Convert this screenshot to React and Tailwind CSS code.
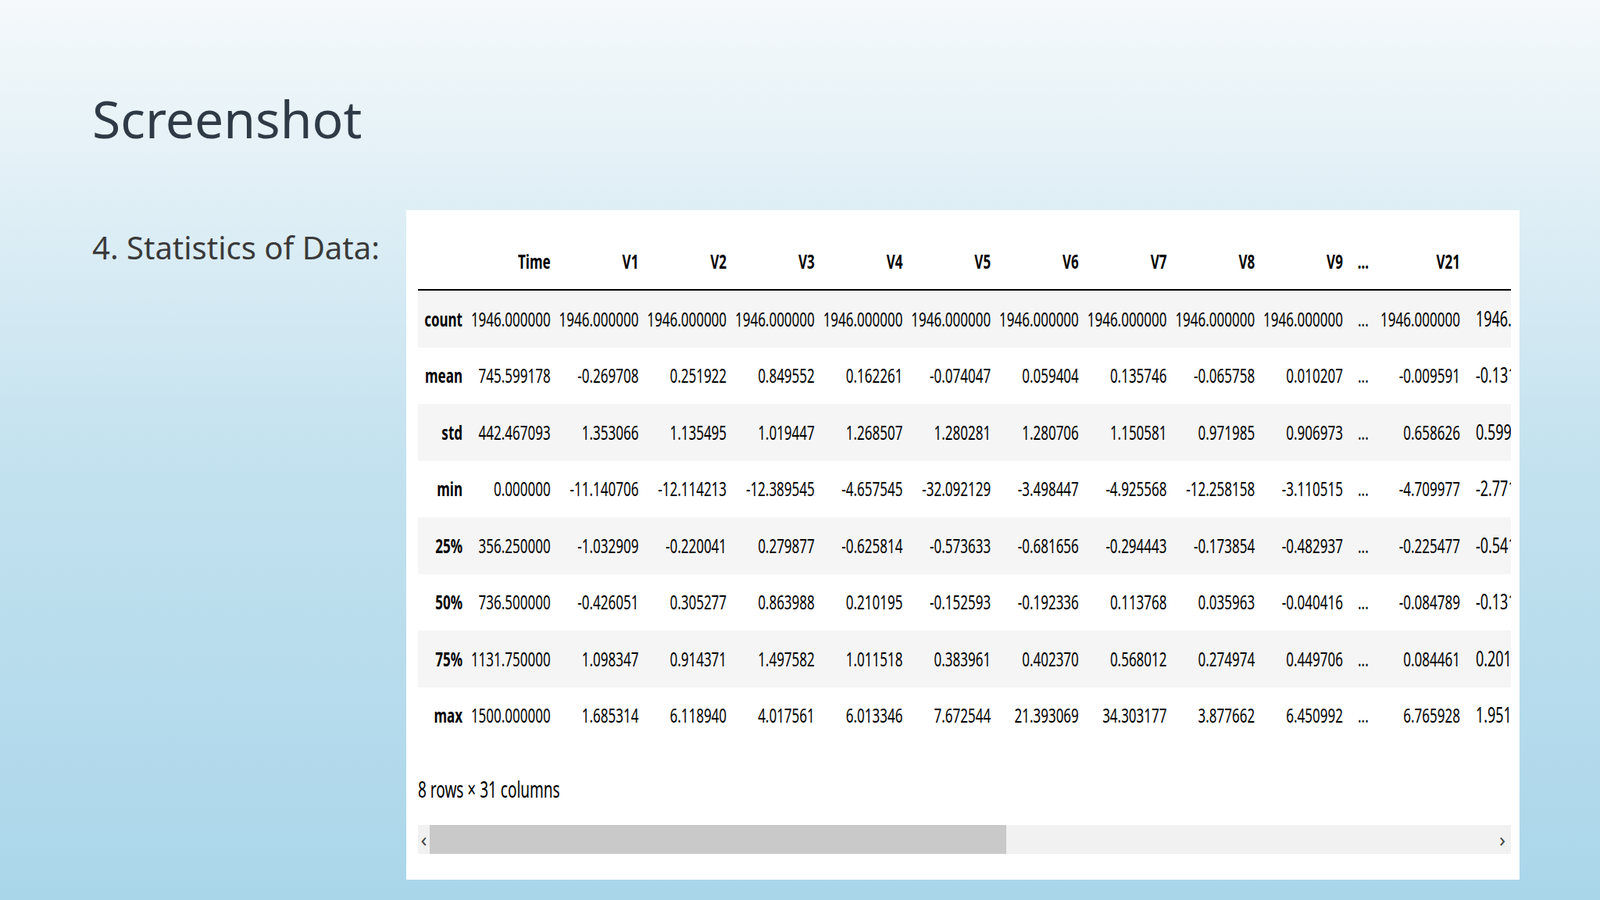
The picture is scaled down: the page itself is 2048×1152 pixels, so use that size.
const cols = ['Time', 'V1', 'V2', 'V3', 'V4', 'V5', 'V6', 'V7', 'V8', 'V9'];

const rows = [
  ['count', '1946.000000', '1946.000000', '1946.000000', '1946.000000', '1946.000000', '1946.000000', '1946.000000', '1946.000000', '1946.000000', '1946.000000', '1946.000000', '1946.000000'],
  ['mean', '745.599178', '-0.269708', '0.251922', '0.849552', '0.162261', '-0.074047', '0.059404', '0.135746', '-0.065758', '0.010207', '-0.009591', '-0.131'],
  ['std', '442.467093', '1.353066', '1.135495', '1.019447', '1.268507', '1.280281', '1.280706', '1.150581', '0.971985', '0.906973', '0.658626', '0.599'],
  ['min', '0.000000', '-11.140706', '-12.114213', '-12.389545', '-4.657545', '-32.092129', '-3.498447', '-4.925568', '-12.258158', '-3.110515', '-4.709977', '-2.771'],
  ['25%', '356.250000', '-1.032909', '-0.220041', '0.279877', '-0.625814', '-0.573633', '-0.681656', '-0.294443', '-0.173854', '-0.482937', '-0.225477', '-0.541'],
  ['50%', '736.500000', '-0.426051', '0.305277', '0.863988', '0.210195', '-0.152593', '-0.192336', '0.113768', '0.035963', '-0.040416', '-0.084789', '-0.131'],
  ['75%', '1131.750000', '1.098347', '0.914371', '1.497582', '1.011518', '0.383961', '0.402370', '0.568012', '0.274974', '0.449706', '0.084461', '0.201'],
  ['max', '1500.000000', '1.685314', '6.118940', '4.017561', '6.013346', '7.672544', '21.393069', '34.303177', '3.877662', '6.450992', '6.765928', '1.951'],
];

const T = ({ children, bold }) => (
  <span className={`inline-block scale-y-[1.5] ${bold ? 'font-bold' : ''}`}>{children}</span>
);

export default function App() {
  return (
    <div className="w-[2048px] h-[1152px] overflow-hidden bg-gradient-to-b from-[#f5f9fb] via-[#c4e2ef] to-[#aad6ea] relative">
      <div className="pl-[118px] pt-[118px] text-[66px] text-[#2e3a46] font-['Open_Sans',sans-serif] leading-none">
        Screenshot
      </div>
      <div className="flex mt-[85px] pl-[118px] font-['Liberation_Sans',sans-serif]">
        <div className="w-[402px] pt-[28px] text-[40px] text-[#3a3a3a] font-['Liberation_Serif',serif] leading-none">
          4. Statistics of Data:
        </div>
        <div className="w-[1425px] h-[857px] bg-white px-[15px] pt-[30px] flex flex-col">
          <div className="w-[1399px] overflow-hidden">
            <div className="flex h-[73px] items-center border-b-2 border-black text-[17px] text-black whitespace-nowrap">
              <div className="w-[63px] shrink-0" />
              {cols.map((c) => (
                <div key={c} className="w-[112.7px] shrink-0 text-right pr-[6px]"><T bold>{c}</T></div>
              ))}
              <div className="w-[40px] shrink-0 text-center"><T bold>...</T></div>
              <div className="w-[110px] shrink-0 text-right pr-[6px]"><T bold>V21</T></div>
              <div className="w-[110px] shrink-0" />
            </div>
            {rows.map((r, i) => (
              <div key={r[0]} className={`flex h-[72.5px] items-center text-[17px] text-black whitespace-nowrap ${i % 2 === 0 ? 'bg-[#f5f5f5]' : 'bg-white'}`}>
                <div className="w-[63px] shrink-0 text-right pr-[6px]"><T bold>{r[0]}</T></div>
                {r.slice(1, 11).map((v, j) => (
                  <div key={j} className="w-[112.7px] shrink-0 text-right pr-[6px]"><T>{v}</T></div>
                ))}
                <div className="w-[40px] shrink-0 text-center"><T>...</T></div>
                <div className="w-[110px] shrink-0 text-right pr-[6px]"><T>{r[11]}</T></div>
                <div className="w-[110px] shrink-0 pl-[14px] text-[18px]"><T>{r[12]}</T></div>
              </div>
            ))}
          </div>
          <div className="mt-[45px] text-[19px] text-black"><T>8 rows × 31 columns</T></div>
          <div className="mt-[30px] w-[1399px] h-[37px] bg-[#f1f1f1] flex items-center text-[#444] text-[26px] leading-none">
            <div className="w-[15px] text-center">‹</div>
            <div className="w-[738px] h-full bg-[#c9c9c9]" />
            <div className="flex-1" />
            <div className="w-[22px] text-center">›</div>
          </div>
        </div>
      </div>
    </div>
  );
}
